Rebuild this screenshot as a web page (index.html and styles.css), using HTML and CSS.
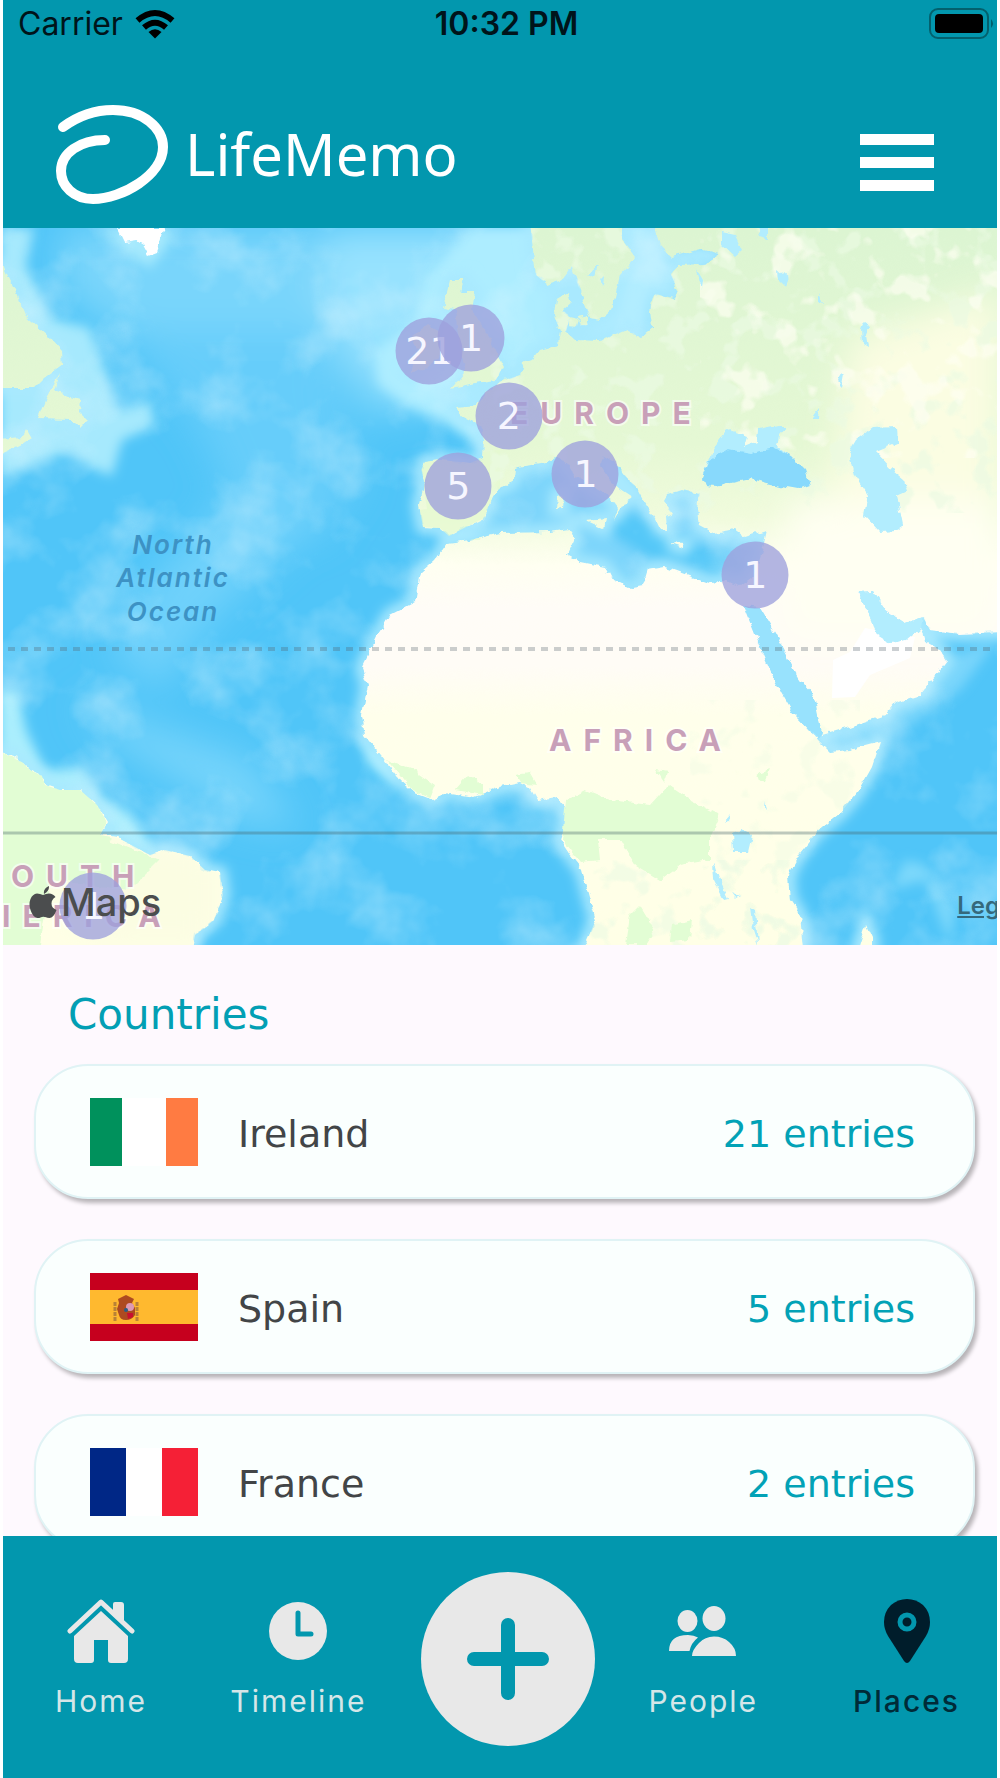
FILE: index.html
```html
<!DOCTYPE html>
<html lang="en">
<head>
<meta charset="utf-8">
<meta name="viewport" content="width=device-width, initial-scale=1">
<title>LifeMemo – Places</title>
<link rel="stylesheet" href="styles.css">
</head>
<body>
<div class="app">
  <div class="status">
    <div class="status-carrier">
      <span>Carrier</span>
      <svg class="wifi" viewBox="0 0 40 30" aria-hidden="true">
        <g fill="none" stroke="#000" stroke-width="6">
          <path d="M2.500 11.500Q20-3.500 37.500 11.500"/>
          <path d="M9 18.500Q20 9 31 18.500"/>
        </g>
        <path d="M20 29.500L13.500 23Q20 17.500 26.500 23Z"/>
      </svg>
    </div>
    <time class="status-time">10:32 PM</time>
    <svg class="battery" viewBox="0 0 66 32" aria-hidden="true">
      <rect x="1" y="1" width="58" height="29" rx="8" fill="none" stroke="#03606d" stroke-width="2"/>
      <rect x="6" y="6" width="48" height="19" rx="4"/>
      <path d="M62 11q4 4.500 0 9z" fill="#03606d"/>
    </svg>
  </div>

  <header class="header">
    <a class="brand" href="#home">
      <svg class="brand-mark" viewBox="56 104 113 101" aria-hidden="true">
        <path d="M63 127C78 116 95 110 113 110C143 110 163 128 163 147C163 175 122 199 93 199C74 199 61 186 61 171C61 153 80 140 105 140" fill="none" stroke="#fff" stroke-width="10" stroke-linecap="round"/>
      </svg>
      <span>LifeMemo</span>
    </a>
    <button class="menu" type="button" aria-label="Menu"><i></i><i></i><i></i></button>
  </header>

  <section class="map" aria-label="Map of places">
    <svg class="map-art" viewBox="3 228 994 717" preserveAspectRatio="xMidYMid slice">
      <defs>
        <linearGradient id="land" gradientUnits="userSpaceOnUse" x1="0" y1="228" x2="0" y2="945">
          <stop offset="0" stop-color="#dcf5d2"/>
          <stop offset=".3" stop-color="#e5f8d4"/>
          <stop offset=".4" stop-color="#f0fbdc"/>
          <stop offset=".47" stop-color="#fffff1"/>
          <stop offset=".53" stop-color="#fffcf7"/>
          <stop offset=".61" stop-color="#fffcf6"/>
          <stop offset=".68" stop-color="#ffffeb"/>
          <stop offset="1" stop-color="#ffffe6"/>
        </linearGradient>
        <filter id="soft" x="-20%" y="-20%" width="140%" height="140%"><feGaussianBlur stdDeviation="6"/></filter>
        <filter id="softer" x="-20%" y="-20%" width="140%" height="140%"><feGaussianBlur stdDeviation="18"/></filter>
        <filter id="rough" x="-2%" y="-2%" width="104%" height="104%">
          <feTurbulence type="fractalNoise" baseFrequency=".12" numOctaves="2" seed="4"/>
          <feDisplacementMap in="SourceGraphic" scale="7" xChannelSelector="R" yChannelSelector="G"/>
        </filter>
        <filter id="seabed" x="0" y="0" width="100%" height="100%">
          <feTurbulence type="fractalNoise" baseFrequency=".014" numOctaves="4" seed="11"/>
          <feColorMatrix values="0 0 0 0 .72  0 0 0 0 .93  0 0 0 0 1  2.600 0 0 0 -1.200"/>
        </filter>
        <filter id="woods" x="0" y="0" width="100%" height="100%">
          <feTurbulence type="fractalNoise" baseFrequency=".035" numOctaves="3" seed="7"/>
          <feColorMatrix values="0 0 0 0 .83  0 0 0 0 .96  0 0 0 0 .77  9 0 0 0 -5"/>
        </filter>
        <filter id="fields" x="0" y="0" width="100%" height="100%">
          <feTurbulence type="fractalNoise" baseFrequency=".03" numOctaves="3" seed="21"/>
          <feColorMatrix values="0 0 0 0 1  0 0 0 0 1  0 0 0 0 .9  9 0 0 0 -5"/>
        </filter>
        <path id="mainland" d="M655 228L660 245L672 257L700 249L720 254L705 264L680 265L671 275L678 290L675 300L655 294L650 310L652 328L640 337L625 330L600 341L575 340L566 332L570 317L563 310L571 303L568 293L556 300L554 315L560 330L558 345L540 350L532 360L523 363L520 375L500 382L485 394L478 405L455 407L465 418L480 425L484 440L483 458L470 463L440 460L425 462L421 470L425 482L419 505L423 527L440 528L449 536L468 526L484 518L490 503L495 492L514 480L515 468L530 465L545 462L556 456L566 462L575 476L600 490L612 500L618 508L614 520L619 511L626 500L632 497L620 489L610 480L600 466L604 456L614 462L622 473L638 490L645 503L655 518L660 529L667 530L666 516L672 513L663 501L667 494L682 490L699 493L697 508L699 526L714 534L735 530L745 537L767 530L762 552L755 575L740 586L722 580L712 584L690 576L665 567L648 570L643 586L632 588L610 577L605 567L580 562L567 555L574 540L570 529L550 532L500 533L470 540L447 543L435 560L420 573L417 590L415 602L390 615L378 635L362 668L368 685L362 715L365 735L385 760L400 780L415 793L433 800L450 793L475 797L500 787L520 783L530 788L537 800L557 797L566 808L565 825L560 840L570 855L582 870L590 900L596 920L587 940L584 950H803L800 915L790 900L788 875L800 853L817 832L840 813L858 792L872 767L880 742L850 750L830 752L818 740L793 712L783 685L775 660L765 640L746 608L757 608L775 635L788 660L800 680L815 700L822 735L850 727L885 715L895 703L920 695L932 680L947 660L940 650L925 642L921 628L907 640L890 643L877 635L872 620L857 592L873 591L886 610L905 623L923 617L930 630L960 634L1002 632V220H655Z"/>
        <path id="isles" d="M530 220L533 250L536 275L548 285L562 280L572 267L578 285L590 318L600 320L612 310L620 275L635 258L622 240V220ZM450 280L464 280L460 292L475 292L472 310L490 338L497 355L503 366L496 380L475 383L452 388L465 372L460 350L455 310L443 308ZM428 325L440 332L440 355L425 370L411 371L418 350L411 337ZM557 495L563 494L562 508L556 509ZM586 520L606 518L604 528ZM668 543L685 544L683 548ZM569 318L578 320L576 327L570 326ZM578 317L588 315L588 325L580 326ZM0 260L15 290L25 315L48 335L62 350L63 365L45 378L35 388H0ZM60 373L55 390L70 397L81 400L80 413L87 420L80 427L70 419L38 418L46 398ZM0 440L22 438L27 428L32 437L20 445L0 454ZM0 752L18 758L30 770L42 776L45 785L60 790L80 790L97 805L107 822L100 835L118 838L150 855L165 850L190 856L205 870L220 873L223 895L214 920L195 935L192 950H0ZM858 950L866 925L872 938L872 950Z"/>
        <clipPath id="on-land"><use href="#mainland"/><use href="#isles"/></clipPath>
      </defs>

      <rect x="3" y="228" width="994" height="717" fill="#50c5f8"/>
      <g filter="url(#softer)">
        <path d="M60 228H560V430L440 400L370 420L320 350L250 370L130 340L60 290Z" fill="#79d5fb"/>
        <path d="M330 228H560V400L400 400L350 350L320 300Z" fill="#97e2fe"/>
        <path d="M120 330L320 330L360 480L320 540L240 520L200 430Z" fill="#66cdfa"/>
        <path d="M230 500L290 480L310 530L210 620L160 690L110 650L160 570Z" fill="#70d1fb"/>
        <path d="M80 700L250 760L300 830L240 820L110 740Z" fill="#76d4fb"/>
      </g>
      <g filter="url(#soft)">
        <path d="M0 228H34L26 265L50 318L90 328L108 380L118 410L150 402L155 426L122 440L112 476L92 468L68 452L0 478Z" fill="#a6e9fd"/>
        <path d="M102 228L125 252L150 268L172 240V228Z" fill="#a6e9fd"/>
        <path d="M470 228H640V350L490 455L470 440L445 422L405 405L378 384L374 352L415 322L425 280Z" fill="#adedff"/>
        <path d="M-2 690L18 690L26 730L45 770L82 768L100 798L128 812L155 850L170 860L100 850L0 780Z" fill="#aaeefd"/>
        <path d="M360 735L395 758L400 790L370 765Z" fill="#b2f1ff"/>
        <path d="M500 470L560 460L630 490L700 490L765 530L750 580H600L560 540L500 530L450 537L500 500Z" fill="#7dd5fb"/>
        <path d="M610 500L650 520L700 545L735 545L720 578L650 560L610 535Z" fill="#55c8f8"/>
        <path d="M820 740L900 700L940 660L997 640L960 690L890 740Z" fill="#79d5fb"/>
        <path d="M890 890L905 860L925 865L955 910L950 945L925 880Z" fill="#7dd8fb"/>
        <path d="M600 220H655L672 262L720 256L680 275L676 298L654 300L650 335L600 342L570 330L572 290L590 325L618 300L632 262Z" fill="#b2edff"/>
      </g>
      <g fill="none" stroke="#a9e9fe" stroke-width="14" filter="url(#soft)"><use href="#mainland"/><use href="#isles"/></g>
      <rect x="3" y="228" width="994" height="717" filter="url(#seabed)" opacity=".38"/>

      <g filter="url(#rough)"><use href="#mainland" fill="url(#land)"/><use href="#isles" fill="url(#land)"/></g>
      <g clip-path="url(#on-land)">
        <g filter="url(#softer)" fill="#fbfde2">
          <path d="M850 340L1000 290V520H830Z"/>
          <path d="M790 500H1000V640H780Z" fill="#fffff2"/>
          <path d="M0 850L60 820L220 850V945H100Z"/>
        </g>
        <path d="M0 752L97 790L110 840L160 860L130 890L50 880L40 945H0Z" fill="#e2fdd4" filter="url(#rough)"/>
        <path d="M420 510L490 500L480 540H415ZM420 460L500 450V500L430 530Z" fill="#e4f9cf" opacity=".7"/>
        <rect x="490" y="228" width="507" height="285" filter="url(#woods)" opacity=".65"/>
        <rect x="700" y="228" width="297" height="230" filter="url(#fields)" opacity=".65"/>
        <rect x="690" y="700" width="170" height="245" filter="url(#woods)" opacity=".35"/>
        <rect x="570" y="860" width="250" height="85" filter="url(#woods)" opacity=".6"/>
      </g>
      <g fill="#e2fdd4" filter="url(#rough)">
        <path d="M566 800L585 790L610 800L650 805L668 785L690 800L720 815L710 840L710 860L680 865L660 880L635 865L620 840L598 840L600 860L580 862L562 840Z"/>
        <path d="M388 760L410 768L435 785L430 798L412 790ZM455 790L468 775L483 785V795ZM515 775L530 773L537 785L520 783ZM655 770L668 772L664 783ZM755 775L770 770L765 782ZM630 915L640 905L655 930L645 945H626ZM672 925L692 920L690 940L670 942Z"/>
      </g>
      <path d="M833 660L850 652L865 628L890 633L915 637L910 658L870 675L855 697L832 698Z" fill="#fff"/>
      <path d="M118 228L125 242L137 240L143 244L149 255L157 252L165 228Z" fill="#fff" filter="url(#rough)"/>
      <g fill="#b2edfe" filter="url(#rough)">
        <path d="M722 232L735 235L742 250L735 256L722 244ZM757 226H768V240L760 238ZM586 275L598 265L594 278ZM600 280L604 276L603 286ZM697 270L703 280L702 290ZM778 270L788 278L785 286L779 280ZM818 293L823 305L818 303ZM865 322L870 325L866 335L868 348L863 345L862 330ZM841 372L844 375L842 386L838 382ZM812 418L820 408L819 418Z"/>
        <path d="M849 452L856 440L872 428L897 427L898 443L876 452L893 470L905 480L908 490L897 495L903 525L895 531L880 532L864 515L868 495L855 475Z"/>
        <path d="M732 833L743 830L752 835L748 852H733ZM713 861L719 880L728 899L724 900L714 880ZM731 892L740 896L736 898ZM750 907L755 910L758 945L753 930ZM765 800L767 810L771 814L764 807ZM724 823L731 815L729 822Z"/>
        <path d="M703 480L712 450L727 429L748 437L745 447L757 442L758 430L778 426L787 426L780 434L778 447L800 465L770 480H730Z"/>
        <path d="M857 592L873 591L886 610L905 623L923 617L921 628L907 640L890 643L877 635L872 620Z"/>
      </g>
      <path d="M703 478L710 460L728 449L750 453L775 448L792 457L805 470L810 485L798 489L770 484L752 479L735 482L715 487L706 486Z" fill="#88d9fc" filter="url(#rough)"/>
      <path d="M744 606L762 652L775 682L793 713L818 738L822 732L812 694L797 677L788 657L775 633L760 608Z" fill="#98e2fd" filter="url(#rough)"/>

      <path d="M8 649H993" stroke="#54606a" stroke-opacity=".3" stroke-width="4" stroke-dasharray="7 6"/>
      <path d="M3 833H997" stroke="#456068" stroke-opacity=".35" stroke-width="3"/>

      <g class="land-label">
        <text x="510" y="424">EUROPE</text>
        <text x="549" y="751">AFRICA</text>
        <text x="11" y="887">OUTH</text>
        <text x="2" y="927">IERICA</text>
      </g>
      <g class="sea-label" text-anchor="middle">
        <text x="173" y="554">North</text>
        <text x="173" y="587">Atlantic</text>
        <text x="173" y="621">Ocean</text>
      </g>
    </svg>

    <button class="pin pin-ireland" type="button">21</button>
    <button class="pin pin-britain" type="button">1</button>
    <button class="pin pin-france" type="button">2</button>
    <button class="pin pin-spain" type="button">5</button>
    <button class="pin pin-italy" type="button">1</button>
    <button class="pin pin-levant" type="button">1</button>
    <button class="pin pin-brazil" type="button">1</button>

    <div class="maps-credit">
      <svg viewBox="0 0 28 34" aria-hidden="true"><path d="M20 1Q20.500 6 15 9Q14 3.500 20 1ZM14 10Q17 8.500 20 8.500Q24 8.500 26.500 12Q22.500 14.500 22.500 18.500Q22.500 23 27.500 25Q24.500 33 20.500 33Q18 33 17 32.300Q14 31.300 11.500 32.500Q10 33.200 8.500 33Q4 32.500 1.500 25Q-.5 19 1.500 14Q3.500 9 8 8.500Q11 8.500 14 10Z"/></svg>
      <span>Maps</span>
    </div>
    <a class="legal" href="#legal">Legal</a>
  </section>

  <main class="places">
    <h1 class="places-title">Countries</h1>
    <ul class="cards">
      <li>
        <a class="card" href="#ireland">
          <svg class="flag" viewBox="0 0 108 68" aria-hidden="true"><path fill="#fff" d="M0 0H108V68H0z"/><path fill="#00915c" d="M0 0H32V68H0z"/><path fill="#ff7b42" d="M76 0H108V68H76z"/></svg>
          <span class="card-name">Ireland</span>
          <span class="card-count">21 entries</span>
        </a>
      </li>
      <li>
        <a class="card" href="#spain">
          <svg class="flag" viewBox="0 0 108 68" aria-hidden="true"><path fill="#c6001e" d="M0 0H108V68H0z"/><path fill="#ffb92f" d="M0 17H108V51H0z"/><path fill="#ad4a20" d="M29 30L28 26L32 24L36 22L40 24L44 26L42 30L45 35V42Q42 47 36 47Q30 47 29 42L27 36Z"/><path fill="none" stroke="#b98236" stroke-width="3" stroke-dasharray="4 1" d="M25 29V49M47 29V49"/><circle cx="40" cy="34" r="4" fill="#dc9ab4"/><path fill="#c8102e" d="M37 40H43V44L38 46z"/><circle cx="36" cy="37" r="2" fill="#285d85"/></svg>
          <span class="card-name">Spain</span>
          <span class="card-count">5 entries</span>
        </a>
      </li>
      <li>
        <a class="card" href="#france">
          <svg class="flag" viewBox="0 0 108 68" aria-hidden="true"><path fill="#fff" d="M0 0H108V68H0z"/><path fill="#002786" d="M0 0H36V68H0z"/><path fill="#f52036" d="M72 0H108V68H72z"/></svg>
          <span class="card-name">France</span>
          <span class="card-count">2 entries</span>
        </a>
      </li>
    </ul>
  </main>

  <nav class="tabs" aria-label="Main">
    <div class="tab-group">
      <a class="tab" href="#home">
        <svg viewBox="0 0 68 68" aria-hidden="true"><path fill="none" stroke="#e8e8e8" stroke-width="5" stroke-linecap="round" stroke-linejoin="round" d="M3 34L34 5L65 34"/><path fill="#e8e8e8" d="M46 13V7Q46 5 48 5H54Q57 5 57 8V27L46 17ZM34 14L61 39V62Q61 66 57 66H44Q41 66 41 63V43H27V63Q27 66 24 66H11Q7 66 7 62V39Z"/></svg>
        <span>Home</span>
      </a>
      <a class="tab" href="#timeline">
        <svg viewBox="0 0 68 68" aria-hidden="true"><circle cx="34" cy="34" r="29" fill="#e8e8e8"/><path fill="none" stroke="#0297ae" stroke-width="5" stroke-linecap="round" stroke-linejoin="round" d="M34 16V37H47"/></svg>
        <span>Timeline</span>
      </a>
    </div>
    <button class="add" type="button" aria-label="Add entry">
      <svg viewBox="0 0 82 82" aria-hidden="true"><path fill="none" stroke="#0297ae" stroke-width="14" stroke-linecap="round" d="M41 7V75M7 41H75"/></svg>
    </button>
    <div class="tab-group">
      <a class="tab" href="#people">
        <svg viewBox="0 0 68 68" aria-hidden="true"><g fill="#e8e8e8"><ellipse cx="18.500" cy="24" rx="10" ry="11"/><ellipse cx="45" cy="21.500" rx="11.500" ry="12.500"/><path d="M23 59Q23 53 30 46Q36 39.500 45 39.500Q54 39.500 60 45Q67 51 67 59H23ZM0 54Q0 38 19 38Q25 38 29 40.500Q22 46 20.500 54Z"/></g></svg>
        <span>People</span>
      </a>
      <a class="tab tab-current" href="#places" aria-current="page">
        <svg viewBox="0 0 68 68" aria-hidden="true"><path fill="#001d2b" d="M34 2Q43 2 50 8Q57 15 57 25Q57 32 53 39L37 64Q34 68 31 64L15 39Q11 32 11 25Q11 15 18 8Q25 2 34 2Z"/><circle cx="34" cy="25" r="7" fill="none" stroke="#0297ae" stroke-width="5"/></svg>
        <span>Places</span>
      </a>
    </div>
  </nav>
</div>
</body>
</html>
```
FILE: styles.css
```css
:root {
  --teal: #0297ae;
  --ui: Inter, "Liberation Sans", sans-serif;
  --body: "DejaVu Sans", Verdana, sans-serif;
}

* {
  box-sizing: border-box;
}

body {
  margin: 0;
  background: #fff;
  font-family: var(--body);
}

a {
  color: inherit;
  text-decoration: none;
}

button {
  padding: 0;
  border: 0;
  font: inherit;
  cursor: pointer;
}

.app {
  display: flex;
  flex-direction: column;
  height: 100vh;
  margin: 0 3px;
  background: #fef9fe;
}

/* Status bar */
.status {
  display: grid;
  grid-template-columns: 1fr auto 1fr;
  align-items: center;
  flex: none;
  height: 48px;
  padding: 0 2px 0 15px;
  background: var(--teal);
  color: #00141a;
  font: 400 32px/48px var(--ui);
}

.status-carrier {
  display: flex;
  align-items: center;
  gap: 12px;
}

.wifi {
  width: 40px;
  height: 30px;
}

.status-time {
  font-weight: 600;
}

.battery {
  justify-self: end;
  width: 66px;
  height: 32px;
}

/* Header */
.header {
  display: flex;
  align-items: center;
  justify-content: space-between;
  flex: none;
  height: 180px;
  padding: 32px 63px 0 53px;
  background: var(--teal);
}

.brand {
  display: flex;
  align-items: center;
  gap: 16px;
  color: #fff;
  font: 400 58px/100px "Noto Sans", "Open Sans", sans-serif;
}

.brand-mark {
  width: 113px;
  height: 101px;
}

.menu {
  display: grid;
  gap: 12px;
  margin-top: 16px;
  background: none;
}

.menu i {
  width: 74px;
  height: 11px;
  background: #fff;
}

/* Map */
.map {
  position: relative;
  flex: none;
  aspect-ratio: 994 / 717;
  overflow: hidden;
}

.map-art {
  display: block;
  width: 100%;
  height: 100%;
}

.land-label {
  fill: #c8a0b8;
  stroke: #fff;
  stroke-opacity: .6;
  stroke-width: 4px;
  paint-order: stroke;
  font: 700 30px var(--ui);
  letter-spacing: 12px;
}

.sea-label {
  fill: #3d92c4;
  font: italic 600 26px var(--ui);
  letter-spacing: 2px;
}

.pin {
  position: absolute;
  width: 67px;
  height: 67px;
  border-radius: 50%;
  background: rgba(157, 160, 220, .78);
  color: #f6f6ff;
  font: 400 38px/67px var(--body);
  transform: translate(-50%, -50%);
}

.pin-ireland { left: 42.9%; top: 17.1%; }
.pin-britain { left: 47.1%; top: 15.4%; }
.pin-france { left: 50.9%; top: 26.2%; }
.pin-spain { left: 45.8%; top: 36%; }
.pin-italy { left: 58.6%; top: 34.3%; }
.pin-levant { left: 75.7%; top: 48.4%; }
.pin-brazil { left: 9.1%; top: 94.6%; }

.maps-credit {
  position: absolute;
  left: 26px;
  bottom: 19px;
  display: flex;
  align-items: center;
  gap: 4px;
  color: #4b4d4e;
  font: 500 38px/48px var(--ui);
}

.maps-credit svg {
  width: 28px;
  height: 34px;
  fill: currentColor;
}

.legal {
  position: absolute;
  left: 96%;
  bottom: 23px;
  color: #35697c;
  font: 600 24px/32px var(--ui);
  text-decoration: underline;
}

/* Countries */
.places {
  flex: 1;
  min-height: 0;
  padding: 46px 22px 0 31px;
  overflow: hidden;
}

.places-title {
  margin: 0 0 25px 34px;
  color: #029fb4;
  font-size: 42px;
  font-weight: 400;
  line-height: 48px;
}

.cards {
  display: grid;
  gap: 40px;
  margin: 0;
  padding: 0;
  list-style: none;
}

.card {
  display: flex;
  align-items: center;
  height: 135px;
  padding: 0 58px 0 54px;
  border: 2px solid #e0f3f5;
  border-radius: 54px;
  background: #fafffe;
  box-shadow: 3px 4px 4px rgba(0, 0, 0, .28);
  font-size: 38px;
}

.flag {
  width: 108px;
  height: 68px;
  margin-right: 40px;
}

.card-name,
.card-count {
  padding-top: 4px;
}

.card-name {
  flex: 1;
  color: #424547;
}

.card-count {
  color: #02a2b6;
}

/* Tab bar */
.tabs {
  display: flex;
  align-items: center;
  gap: 54px;
  flex: none;
  height: 242px;
  padding: 4px 37px 0 52px;
  background: var(--teal);
}

.tab-group {
  display: flex;
  justify-content: space-between;
  flex: 1;
}

.tab {
  display: flex;
  flex-direction: column;
  align-items: center;
  gap: 16px;
  color: #d5e6e8;
  font: 400 30px/40px var(--ui);
  letter-spacing: 2px;
}

.tab svg {
  width: 68px;
  height: 68px;
}

.tab-current {
  color: #002b38;
  font-weight: 500;
}

.add {
  display: grid;
  place-items: center;
  width: 174px;
  height: 174px;
  border-radius: 50%;
  background: #e8e8e8;
}

.add svg {
  width: 82px;
  height: 82px;
}
```
